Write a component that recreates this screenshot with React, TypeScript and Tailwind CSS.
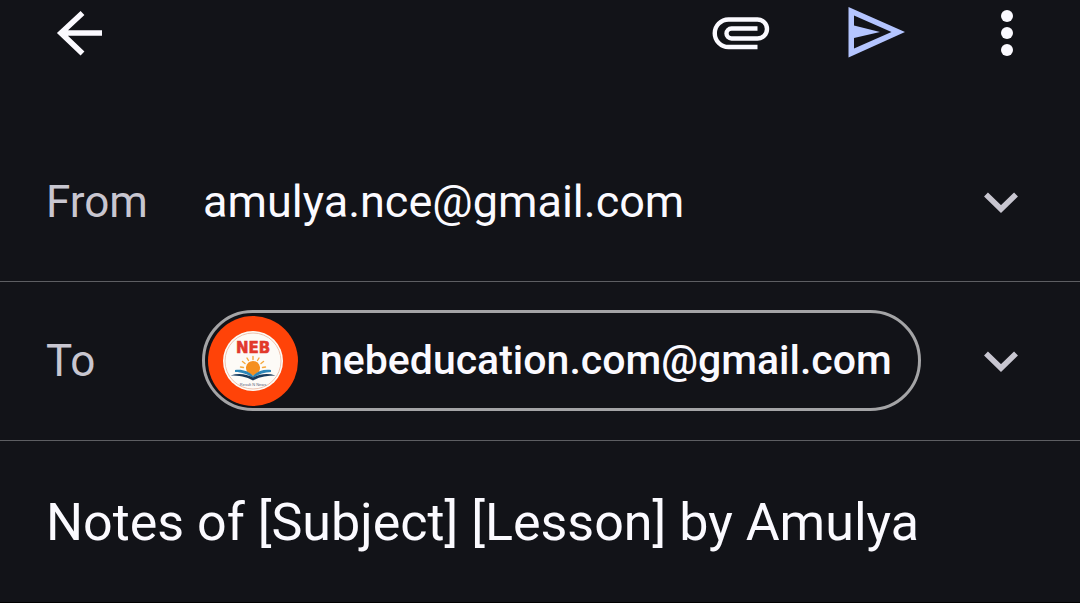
import type { ReactNode } from "react";

const accounts = ["amulya.nce@gmail.com"];
const recipient = "nebeducation.com@gmail.com";

function ArrowLeftIcon() {
  return (
    <svg viewBox="0 0 48 48" className="size-12" fill="none" stroke="currentColor" strokeWidth="5.6">
      <path d="M48 24H7M28.5 4L7 24 28.5 44.5" />
    </svg>
  );
}

function PaperclipIcon() {
  return (
    <svg viewBox="0 0 60 36" className="h-9 w-15" fill="none" stroke="currentColor" strokeWidth="4.4">
      <path d="M46.5 32H17.5a13.75 13.75 0 0 1 0-27.5h29a9.5 9.5 0 0 1 0 19H20.5a5 5 0 0 1 0-10h26" />
    </svg>
  );
}

function SendIcon() {
  return (
    <svg viewBox="0 0 60 52" className="h-13 w-15" fill="currentColor" fillRule="evenodd">
      <path d="M1.5 0L58 25 1.5 50.5ZM7 8.5V18.5L33 25 7 31V41.5L44.5 25Z" />
    </svg>
  );
}

function DotsIcon() {
  return (
    <svg viewBox="0 0 12 48" className="h-12 w-3" fill="currentColor">
      <circle cx="6" cy="7" r="6" />
      <circle cx="6" cy="24" r="6" />
      <circle cx="6" cy="41" r="6" />
    </svg>
  );
}

function ChevronIcon() {
  return (
    <svg viewBox="0 0 36 24" className="h-6 w-9" fill="none" stroke="currentColor" strokeWidth="5.6">
      <path d="M3 4.5L18 19 33 4.5" />
    </svg>
  );
}

function NebAvatar() {
  return (
    <svg viewBox="0 0 90 90" className="size-[90px] shrink-0">
      <circle cx="45" cy="45" r="45" fill="#ff4308" />
      <circle cx="45" cy="45" r="30" fill="#fdfbf7" />
      <circle cx="45" cy="45" r="28" fill="none" stroke="#e8b49c" strokeWidth="0.8" />
      <text
        x="45"
        y="37"
        textAnchor="middle"
        fontFamily="'DejaVu Sans', sans-serif"
        fontSize="15"
        fontWeight="700"
        fill="#e2392b"
        stroke="#e2392b"
        strokeWidth="0.6"
      >
        NEB
      </text>
      <g stroke="#f5a93c" strokeWidth="1.4" strokeLinecap="round">
        <path d="M45 43.5V40.5M40.5 44.5L39 42M49.5 44.5L51 42M37 47.5L34.5 45.5M53 47.5L55.5 45.5M35.500 51.5L32.500 51M54.500 51.5L57.500 51" />
      </g>
      <path d="M39 55.500a7 7 0 1 1 12 0L45 60Z" fill="#f58f1f" />
      <path d="M27 54c7-1 14 1 18 6 4-5 11-7 18-6v2c-7 0-13 2.500-18 6-5-3.500-11-6-18-6Z" fill="#2c86b8" />
      <path d="M22.500 59.500c8-2.500 16-1.500 22.500 2 6.500-3.500 14.500-4.500 22.500-2-8 0-16 1.200-22.500 5-6.500-3.800-14.500-5-22.500-5Z" fill="#173a5c" />
      <text x="45" y="70" textAnchor="middle" fontFamily="'Liberation Sans', sans-serif" fontSize="4" fill="#57627a">
        Result N News
      </text>
    </svg>
  );
}

function Row({ children }: { children: ReactNode }) {
  return <div className="flex h-[159px] items-center border-b border-[#5d5e62] pr-[61px] pb-px pl-[46px]">{children}</div>;
}

export default function App() {
  return (
    <main className="min-h-screen bg-[#121318] font-['Roboto',sans-serif] text-[#fbfaff]">
      <header className="flex h-[123px] items-start justify-between pt-[7px] pr-[67px] pl-[54px]">
        <button type="button" aria-label="Back" className="mt-0.5">
          <ArrowLeftIcon />
        </button>
        <div className="flex h-13 items-center">
          <button type="button" aria-label="Attach file">
            <PaperclipIcon />
          </button>
          <button type="button" aria-label="Send" className="ml-19 text-[#b4c5ff]">
            <SendIcon />
          </button>
          <button type="button" aria-label="More options" className="ml-[94px]">
            <DotsIcon />
          </button>
        </div>
      </header>

      <Row>
        <label htmlFor="from" className="w-[157px] shrink-0 text-[44px] text-[#c8c6d0]">
          From
        </label>
        <div className="grid flex-1 items-center">
          <select id="from" className="col-start-1 row-start-1 w-full appearance-none bg-transparent text-[45px] outline-none">
            {accounts.map((account) => (
              <option key={account}>{account}</option>
            ))}
          </select>
          <span className="pointer-events-none col-start-1 row-start-1 justify-self-end text-[#c8c6d0]">
            <ChevronIcon />
          </span>
        </div>
      </Row>

      <Row>
        <span className="w-[156px] shrink-0 text-[44px] text-[#c8c6d0]">To</span>
        <button
          type="button"
          className="flex h-[101px] items-center gap-[22px] rounded-full border-3 border-[#a4a4a6] pr-[26px] pl-[3px] text-[41px] font-medium"
        >
          <NebAvatar />
          {recipient}
        </button>
        <button type="button" aria-label="Show Cc and Bcc" className="ml-auto text-[#c8c6d0]">
          <ChevronIcon />
        </button>
      </Row>

      <div className="flex h-[162px] items-center border-b border-black px-[46px] pt-0.5">
        <input
          type="text"
          aria-label="Subject"
          defaultValue="Notes of [Subject] [Lesson] by Amulya"
          className="w-full bg-transparent text-[52px] outline-none"
        />
      </div>
    </main>
  );
}
